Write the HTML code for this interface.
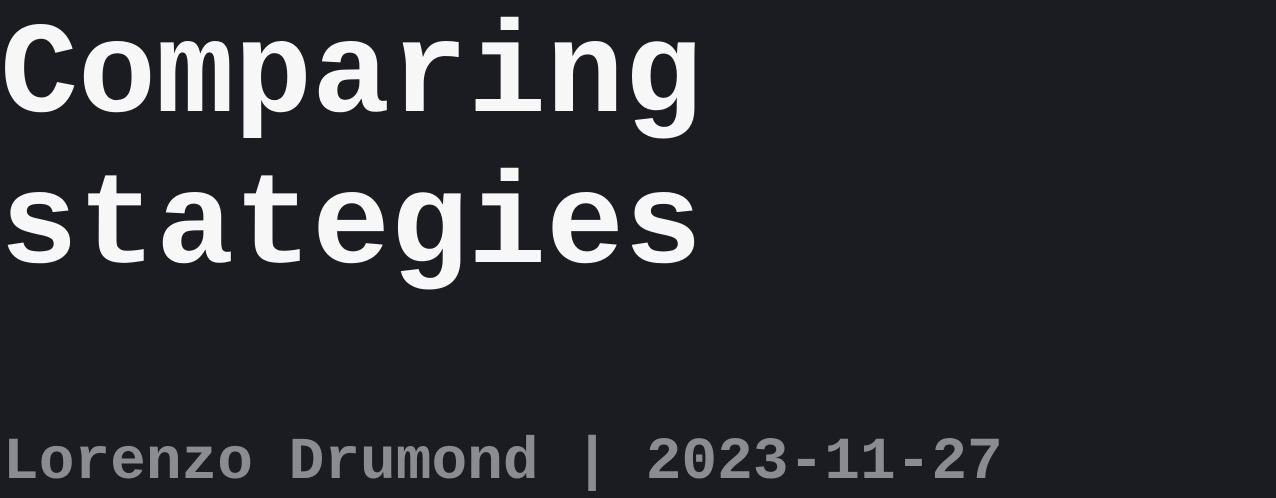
<!DOCTYPE html>
<html><head><meta charset="utf-8"><style>
html,body{margin:0;padding:0;background:#1b1c21;width:1276px;height:498px;overflow:hidden}
.t{position:absolute;left:0;font-family:"Liberation Mono",monospace;font-weight:bold;line-height:1;white-space:pre}
.h{font-size:130px;color:#f7f7f7}
.s{font-size:59.5px;color:#8b8c91;left:3px}
</style></head><body>
<div class="t h" style="top:13px">Comparing</div>
<div class="t h" style="top:164px">stategies</div>
<div class="t s" style="top:433px">Lorenzo Drumond | 2023-11-27</div>
</body></html>
